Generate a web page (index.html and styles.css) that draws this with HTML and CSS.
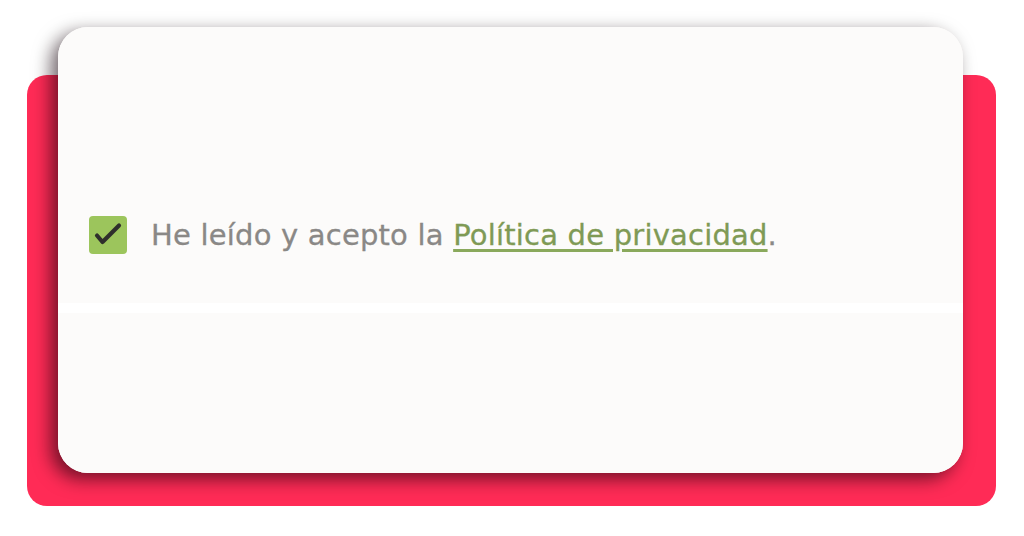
FILE: index.html
```html
<!DOCTYPE html>
<html lang="es">
<head>
<meta charset="utf-8">
<link rel="stylesheet" href="styles.css">
</head>
<body>
<div class="stage">
  <div class="backdrop"></div>
  <div class="card">
    <div class="panel">
      <label class="consent">
        <span class="box">
          <svg width="38" height="38" viewBox="0 0 38 38"><path d="M8 19.5 L13.5 26 L30 9.5" fill="none" stroke="#2f2f2c" stroke-width="4.2" stroke-linecap="round" stroke-linejoin="round"/></svg>
        </span>
        <span class="text">He leído y acepto la <a class="link" href="#">Política de privacidad</a>.</span>
      </label>
    </div>
    <div class="divider"></div>
    <div class="panel lower"></div>
  </div>
</div>
</body>
</html>
```
FILE: styles.css
```css
html, body {
  margin: 0;
  padding: 0;
  background: #ffffff;
}
.stage {
  width: 1024px;
  height: 536px;
  display: grid;
  overflow: hidden;
}
.backdrop, .card {
  grid-area: 1 / 1;
  justify-self: start;
  align-self: start;
}
.backdrop {
  margin: 75px 0 0 27px;
  width: 969px;
  height: 431px;
  background: #ff2b56;
  border-radius: 20px;
}
.card {
  margin: 27px 0 0 58px;
  width: 905px;
  height: 446px;
  background: #fcfbfa;
  border-radius: 30px;
  box-shadow: -7px 6px 18px rgba(20, 0, 10, 0.6);
  display: flex;
  flex-direction: column;
  overflow: hidden;
}
.panel {
  height: 276px;
  background: #fcfbfa;
  display: flex;
  align-items: flex-start;
  padding: 189px 0 0 31px;
  box-sizing: border-box;
}
.panel.lower {
  flex: 1;
  height: auto;
  padding: 0;
}
.divider {
  height: 10px;
  background: #ffffff;
}
.consent {
  display: flex;
  align-items: center;
  gap: 24px;
}
.box {
  width: 38px;
  height: 38px;
  background: #9cc55c;
  border-radius: 4px;
  display: block;
}
.box svg { display: block; }
.text {
  font-family: "DejaVu Sans", "Liberation Sans", sans-serif;
  font-size: 29px;
  letter-spacing: 0.2px;
  color: #8a8886;
  -webkit-text-stroke: 0.3px #8a8886;
}
.link {
  color: #7f9a55;
  -webkit-text-stroke: 0.3px #7f9a55;
  text-decoration: underline;
  text-decoration-color: #8aa95c;
  text-decoration-thickness: 2.5px;
  text-underline-offset: 4px;
}
```
